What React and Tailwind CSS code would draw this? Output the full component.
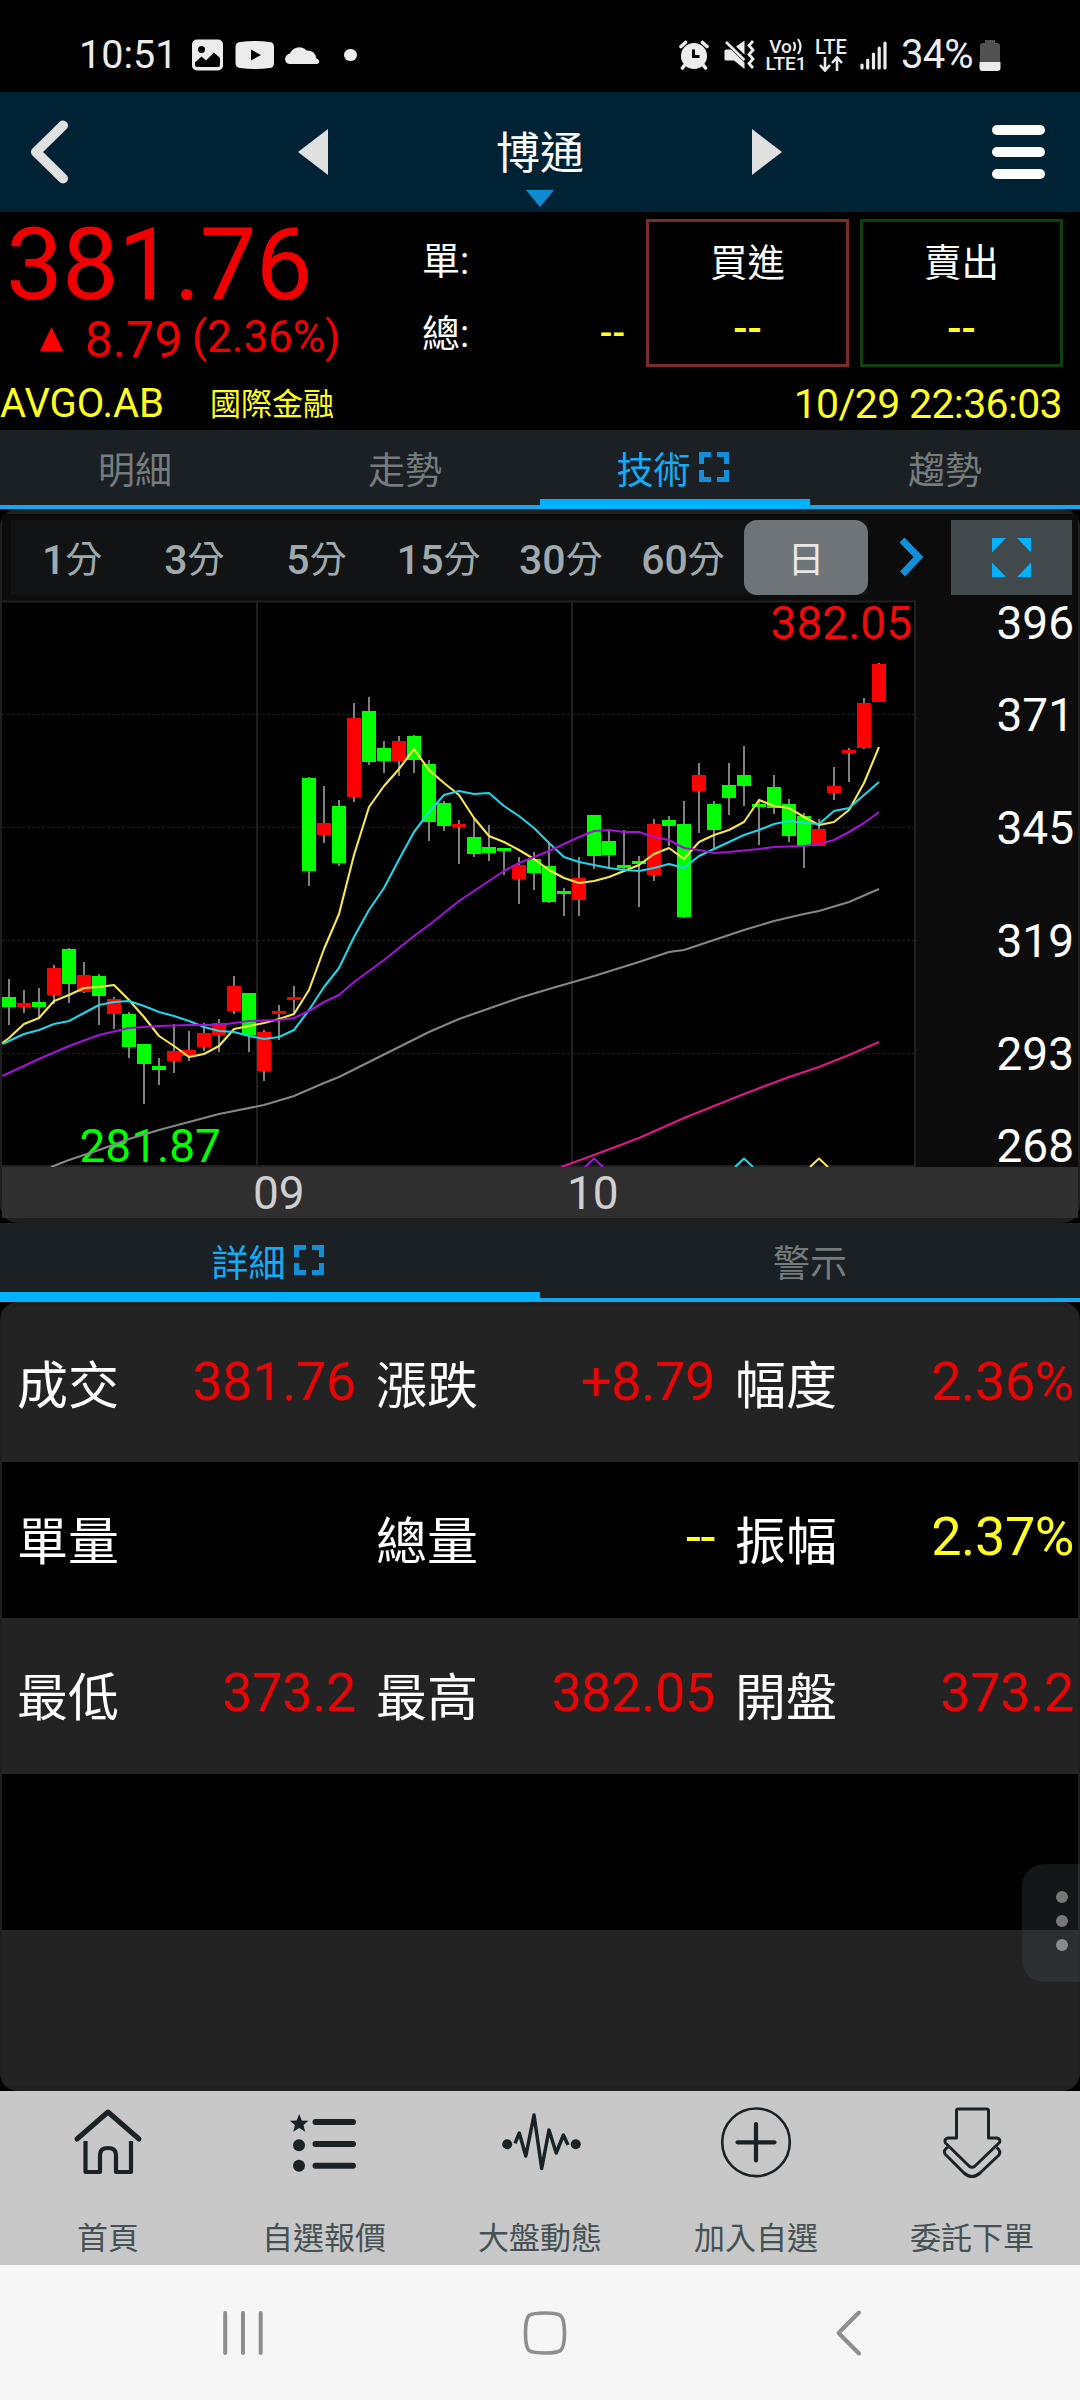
import React from "react";

// [bodyTop, bodyBottom, wickTop, wickBottom, rising]
const CANDLES = [
  [997, 1007, 979, 1025, 0], [1003, 1007, 990, 1013, 1], [1002, 1007, 988, 1018, 0], [968, 995, 965, 1004, 1],
  [949, 984, 948, 1003, 0], [975, 992, 962, 993, 1], [976, 996, 974, 1025, 0], [999, 1014, 997, 1029, 1],
  [1014, 1047, 1012, 1058, 0], [1044, 1064, 1044, 1104, 0], [1066, 1070, 1058, 1085, 0], [1051, 1061, 1024, 1073, 1],
  [1050, 1056, 1031, 1061, 1], [1033, 1047, 1023, 1051, 1], [1023, 1035, 1019, 1052, 1], [986, 1011, 976, 1014, 1],
  [993, 1035, 993, 1052, 0], [1032, 1071, 1030, 1081, 1], [1011, 1014, 1005, 1040, 1], [997, 1000, 986, 1013, 1],
  [778, 871, 777, 886, 0], [823, 835, 786, 843, 1], [806, 863, 800, 866, 0], [718, 797, 703, 802, 1],
  [711, 762, 697, 765, 0], [748, 761, 741, 773, 0], [741, 761, 736, 776, 1], [736, 760, 735, 773, 0],
  [764, 822, 760, 841, 0], [803, 826, 801, 831, 0], [824, 827, 820, 864, 1], [837, 854, 817, 857, 0],
  [847, 853, 825, 861, 0], [848, 851, 848, 875, 0], [865, 879, 857, 904, 1], [859, 873, 852, 890, 0],
  [866, 902, 843, 903, 0], [891, 894, 888, 916, 0], [878, 900, 857, 916, 1], [815, 856, 815, 869, 0],
  [841, 855, 830, 868, 0], [865, 868, 830, 872, 0], [861, 864, 856, 907, 0], [824, 875, 819, 881, 1],
  [820, 826, 816, 846, 0], [824, 917, 801, 918, 0], [775, 791, 763, 833, 1], [804, 830, 801, 850, 0],
  [785, 798, 763, 815, 0], [775, 786, 746, 806, 0], [804, 807, 799, 845, 0], [787, 808, 775, 814, 0],
  [804, 836, 799, 842, 0], [816, 846, 813, 868, 0], [829, 846, 819, 846, 1], [786, 793, 767, 800, 1],
  [750, 753, 748, 782, 1], [703, 748, 698, 749, 1], [664, 702, 663, 702, 1],
];

const MA5 = [1038, 1024, 1018, 1001, 995, 988, 987, 985, 1000, 1017, 1036, 1046, 1057, 1054, 1046, 1029, 1026, 1023, 1019, 1014, 990, 949, 914, 855, 807, 786, 769, 749, 770, 783, 795, 818, 836, 842, 850, 859, 870, 878, 883, 881, 877, 871, 865, 854, 848, 859, 842, 835, 830, 822, 800, 806, 808, 817, 825, 822, 810, 783, 747];
const MA10 = [1041, 1034, 1030, 1024, 1021, 1013, 1005, 1002, 1001, 1006, 1012, 1016, 1021, 1027, 1031, 1032, 1036, 1039, 1037, 1030, 1010, 987, 968, 937, 910, 888, 859.5, 832, 812, 795, 791, 794, 793, 806, 816, 828, 843, 857, 862, 865, 868, 870, 871, 868, 864, 868, 856, 849, 842, 835, 830, 824, 821, 823, 824, 811, 808, 795, 782];
const MA20 = [[-0.45, 1076], [2, 1059], [4, 1046], [6, 1035], [8, 1028], [10, 1026], [12, 1025], [14, 1025], [16, 1021], [18, 1020], [19, 1018], [20, 1011], [21, 1002], [22, 995], [23, 982], [24, 971], [25, 960], [26, 948], [27, 936], [28, 925], [29, 913], [30, 901], [32, 881], [33, 871], [34, 863], [35, 857], [36, 851], [37, 844], [38, 837], [39, 831], [40, 830], [41, 832], [42, 832], [43, 837], [44, 840], [45, 848], [46, 850], [47, 853], [48, 852], [50, 849], [51, 847], [53, 846], [54, 844], [55, 840], [56, 832], [57, 823], [58, 812]];
const MA60 = [[2.8, 1167], [4, 1160], [6, 1150], [8, 1139], [10, 1130], [12, 1122], [14, 1114], [15, 1111], [17, 1105], [19, 1096], [21, 1083], [22, 1077], [24, 1062], [28, 1032], [30, 1019], [34, 998], [36, 989], [39, 976], [42, 962], [44, 952], [45, 950], [46, 945], [47, 940], [49, 930], [51, 921], [53, 914], [54, 911], [56, 902], [58, 889]];
const MA120 = [[36.8, 1167], [39, 1155], [42, 1138], [45, 1118], [46, 1112], [49, 1094], [52, 1077], [54, 1067], [56, 1055], [58, 1042]];

const cx = (k) => 7 + 15 * k;
const pts = (list) => list.map(([k, y]) => `${cx(k)},${y}`).join(" ");
const series = (list, start) => pts([[-0.45, start], ...list.map((y, k) => [k, y])]);

function Chart() {
  return (
    <svg width="914" height="566" viewBox="0 601 914 566" className="block shrink-0 overflow-visible bg-black">
      <g stroke="#202020" strokeWidth="2" fill="none">
        <path d="M255 601V1167M570 601V1167M913 601V1167" />
        <path d="M0 601.500H914" />
        <path d="M0 1166H914" />
        <path d="M0 714.300H914M0 827.300H914M0 940.500H914M0 1053.600H914" stroke="#1c1c1c" strokeWidth="1.300" strokeDasharray="3 2" />
      </g>
      <text x="910" y="639" textAnchor="end" fontSize="46" fill="#f00a0a">382.05</text>
      <text x="77.500" y="1162" fontSize="46" fill="#00ff00">281.87</text>
      {CANDLES.map(([t, b, wt, wb, up], k) => (
        <g key={k}>
          <rect x={cx(k) - 1} y={wt} width="2" height={wb - wt} fill="#808080" />
          <rect x={cx(k) - 7} y={t} width="14" height={b - t} fill={up ? "#ff0000" : "#00ff00"} />
        </g>
      ))}
      <g fill="none" strokeWidth="2.100" strokeLinejoin="round">
        <polyline points={series(MA5, 1043)} stroke="#f8e94a" />
        <polyline points={series(MA10, 1044)} stroke="#1fd5ea" />
        <polyline points={pts(MA20)} stroke="#a312d6" />
        <polyline points={pts(MA60)} stroke="#858788" />
        <polyline points={pts(MA120)} stroke="#e0168c" />
        <path d="M583 1167L592 1158.500L601 1167" stroke="#a312d6" />
        <path d="M733 1167L742 1158.500L751 1167" stroke="#1fd5ea" />
        <path d="M808 1167L817 1158.500L826 1167" stroke="#f8e94a" />
      </g>
    </svg>
  );
}

function StatusBar() {
  return (
    <div className="flex h-[92px] items-center justify-between bg-black pl-[79px] pr-[79px] pt-[18px] text-[#ececec]">
      <div className="flex items-center">
        <span className="w-[113px] text-[39.5px] leading-none">10:51</span>
        <svg width="32" height="32" viewBox="0 0 32 32">
          <rect x="0" y="0.5" width="31" height="31" rx="5" fill="#ececec" />
          <circle cx="9.5" cy="10.5" r="3.5" fill="#000" />
          <path d="M3 23.5L9.5 17.5L14 21.5L22 13.5L28 19V26Q28 28 26 28H5Q3 28 3 26Z" fill="#000" />
        </svg>
        <svg width="40" height="30" viewBox="0 0 40 30" className="ml-[11px]">
          <path d="M5 2Q20 0 35 2Q39 2.500 39 7V23Q39 27.500 35 28Q20 30 5 28Q0.500 27.500 0.500 23V7Q0.500 2.500 5 2Z" fill="#ececec" />
          <path d="M16 9.500L26 15L16 20.500Z" fill="#000" />
        </svg>
        <svg width="36" height="22" viewBox="0 0 36 22" className="mb-[2px] ml-[9px]">
          <path d="M5 21A4.500 5 0 0 1 3 12Q4 10.500 6 10.500A10 10 0 0 1 22.500 7.500Q31 7 32.500 15.500Q36 17 35 19.500Q34.500 21 32 21Z" fill="#ececec" />
        </svg>
        <span className="ml-[24px] size-[12.500px] rounded-full bg-[#ececec]" />
      </div>
      <div className="flex items-center">
        <svg width="30" height="30" viewBox="0 0 30 30">
          <circle cx="15" cy="16" r="13" fill="#ececec" />
          <path d="M2 6.500L6.500 2.500M28 6.500L23.500 2.500M5 26L3.500 28M25 26L26.500 28" stroke="#ececec" strokeWidth="3.600" strokeLinecap="round" />
          <path d="M14.500 9.500V16.500H20.500" fill="none" stroke="#000" strokeWidth="3" />
        </svg>
        <svg width="31" height="30" viewBox="0 0 31 30" className="ml-[15px]">
          <path d="M0.500 11Q0.500 9.500 2 9.500H7L20.500 22.500V29L10 20.500H2Q0.500 20.500 0.500 19Z" fill="#ececec" />
          <path d="M12 6.500L20.500 0.500V14.500Z" fill="#ececec" />
          <path d="M2 2L20.500 20" stroke="#ececec" strokeWidth="2.500" />
          <path d="M29 1L25 5.500L29 10L25 14.500L29 19L25 23.500L29 28" fill="none" stroke="#ececec" strokeWidth="2.800" />
        </svg>
        <div className="ml-[12px] flex w-[38px] shrink-0 flex-col items-center font-medium leading-none">
          <div className="flex h-[17px] shrink-0 items-center">
            <span className="text-[19px] leading-[17px]">Vo</span>
            <svg width="11" height="17" viewBox="0 0 11 17" className="shrink-0">
              <path d="M1.500 4Q4.500 8.500 1.500 13M6 1Q11 8.500 6 16" fill="none" stroke="#ececec" strokeWidth="2.200" />
            </svg>
          </div>
          <span className="text-[19px] leading-[17px]">LTE1</span>
        </div>
        <div className="ml-[9px] flex w-[34px] shrink-0 flex-col items-center font-medium">
          <span className="text-[20px] leading-[18px]">LTE</span>
          <svg width="26" height="16" viewBox="0 0 26 16">
            <path d="M7 1V14M2 9L7 14.500L12 9M19 15V2M14 7L19 1.500L24 7" fill="none" stroke="#ececec" strokeWidth="2.600" />
          </svg>
        </div>
        <svg width="28" height="30" viewBox="0 0 28 30" className="ml-[12px]">
          <path d="M2 25V28M7.700 20V28M13.500 14V28M19.200 8V28M25 3V28" stroke="#ececec" strokeWidth="3.200" strokeLinecap="round" />
        </svg>
        <span className="ml-[13px] w-[71px] text-[40px] leading-none tracking-[-0.800px]">34%</span>
        <svg width="22" height="33" viewBox="0 0 22 33" className="ml-[7px]">
          <path d="M6 1H16V4H18Q21 4 21 7V23H1V7Q1 4 4 4H6Z" fill="#525252" />
          <path d="M0.500 23H21.500V29Q21.500 32 18.500 32H3.500Q0.500 32 0.500 29Z" fill="#ececec" />
        </svg>
      </div>
    </div>
  );
}

function Header() {
  return (
    <div className="flex h-[120px] items-center bg-[#002235]">
      <svg width="38" height="64" viewBox="0 0 38 64" className="ml-[30px]">
        <path d="M33 5.500L6 32L33 58.500" fill="none" stroke="#e0e0e0" strokeWidth="10" strokeLinecap="round" strokeLinejoin="round" />
      </svg>
      <svg width="30" height="46" viewBox="0 0 30 46" className="ml-[230px]"><path d="M30 0V46L0 23Z" fill="#e0e0e0" /></svg>
      <div className="ml-[168px] flex h-full w-[88px] flex-col items-center pt-[38px]">
        <span className="text-[44px] leading-[48px] text-white">博通</span>
        <svg width="28" height="17" viewBox="0 0 28 17" className="mt-[12px]"><path d="M0 0H28L14 17Z" fill="#0f8bd0" /></svg>
      </div>
      <svg width="30" height="46" viewBox="0 0 30 46" className="ml-[168px]"><path d="M0 0V46L30 23Z" fill="#e0e0e0" /></svg>
      <div className="ml-[210px] flex w-[53px] flex-col gap-[12px]">
        <span className="h-[10px] rounded-full bg-white" />
        <span className="h-[10px] rounded-full bg-white" />
        <span className="h-[10px] rounded-full bg-white" />
      </div>
    </div>
  );
}

function Quote() {
  return (
    <div className="h-[218px] bg-black">
      <div className="flex h-[164px]">
        <div className="w-[422px] text-[#f00000]">
          <div className="pl-[6px] pt-[2px] text-[101px] leading-[101px] tracking-[-0.800px]">381.76</div>
          <div className="flex pl-[40px]">
            <svg width="23" height="24" viewBox="0 0 23 24" className="mt-[12px]"><path d="M11.500 0L23 24H0Z" fill="#ff0000" /></svg>
            <span className="ml-[22px] w-[107px] text-[50px] leading-[50px]">8.79</span>
            <span className="text-[44px] leading-[45px]">(2.36%)</span>
          </div>
        </div>
        <div className="w-[224px] text-[38px] leading-[40px] text-white">
          <div className="mt-[29px]">單:</div>
          <div className="mt-[33px] flex justify-between pr-[21px]">
            <span>總:</span>
            <span className="text-[37px] font-medium text-[#ffff22]">--</span>
          </div>
        </div>
        <div className="mt-[7px] flex gap-[11px]">
          <div className="flex h-[148px] w-[203px] flex-col items-center border-[3px] border-[#7a2b2b] pt-[20.500px] text-[37.500px] leading-[40px] text-white">
            <span>買進</span>
            <span className="mt-[26px] text-[42px] font-medium text-[#ffff22]">--</span>
          </div>
          <div className="flex h-[148px] w-[203px] flex-col items-center border-[3px] border-[#12400c] pt-[20.500px] text-[37.500px] leading-[40px] text-white">
            <span>賣出</span>
            <span className="mt-[26px] text-[42px] font-medium text-[#ffff22]">--</span>
          </div>
        </div>
      </div>
      <div className="flex h-[54px] items-center pt-[2px] text-[#ffff22]">
        <span className="w-[210px] text-[40px] leading-none">AVGO.AB</span>
        <span className="text-[31px] leading-none">國際金融</span>
        <span className="ml-auto mr-[18px] text-[41px] leading-none tracking-[-0.650px]">10/29 22:36:03</span>
      </div>
    </div>
  );
}

function Corners() {
  return (
    <svg width="30" height="30" viewBox="0 0 30 30" className="mb-[1px] ml-[8px] mr-[5px]">
      <path d="M2.500 12V2.500H12M18 2.500H27.500V12M27.500 18V27.500H18M12 27.500H2.500V18" fill="none" stroke="#128fd6" strokeWidth="5" />
    </svg>
  );
}

function Tabs({ items }) {
  return (
    <div className="flex h-[79px] bg-[#1a2023]">
      {items.map(([label, active]) => (
        <div
          key={label}
          className={
            active
              ? "flex flex-1 items-center justify-center border-b-[10px] border-[#00b2ff] pt-[6px] text-[37px] text-[#12adf5]"
              : "flex flex-1 items-center justify-center border-b-[4px] border-[#14a8ef] pt-[4px] text-[37px] text-[#767b7d]"
          }
        >
          <span className={active ? "mt-[9px] leading-[40px]" : "mt-[5px] leading-[40px]"}>{label}</span>
          {active && <Corners />}
        </div>
      ))}
    </div>
  );
}

const INTERVALS = ["1", "3", "5", "15", "30", "60"];

function ChartPanel() {
  return (
    <div className="h-[714px] rounded-[18px] bg-[#1f1f1f] px-[2px] pt-[5px] pb-[5px]">
      <div className="flex h-[87px] bg-[#0c0c0c] pl-[9px] pt-[6px]">
        <div className="flex h-[75px] w-[857px] bg-[#121315]">
          {INTERVALS.map((n) => (
            <div key={n} className="flex w-[122.200px] items-center justify-center pt-[5px] text-[#a0a9ac]">
              <span className="text-[41px] font-medium leading-none">{n}</span>
              <span className="text-[37px] leading-none">分</span>
            </div>
          ))}
          <div className="flex flex-1 items-center justify-center rounded-[13px] bg-[#6e7478] pt-[5px] text-[37px] leading-none text-[#e8e8e8]">日</div>
        </div>
        <svg width="25" height="40" viewBox="0 0 25 40" className="ml-[31px] mt-[17px]">
          <path d="M3 3L19.500 20L3.500 37" fill="none" stroke="#128fd6" strokeWidth="7" />
        </svg>
        <div className="ml-[27px] flex h-[75px] w-[121px] items-center justify-center bg-[#41494c] pr-px">
          <svg width="39" height="39" viewBox="0 0 39 39">
            <path d="M0 0H14L0 14.500ZM39 0H25L39 14.500ZM0 39H14L0 24.500ZM39 39H25L39 24.500Z" fill="#00b2ff" />
          </svg>
        </div>
      </div>
      <div className="flex h-[566px] bg-[#0c0c0c]">
        <Chart />
        <div className="flex flex-1 flex-col items-end pr-[4px] text-[46px] leading-[46px] text-white">
          <span className="mt-[-1px]">396</span>
          <span className="mt-[46px]">371</span>
          <span className="mt-[67px]">345</span>
          <span className="mt-[67px]">319</span>
          <span className="mt-[67px]">293</span>
          <span className="mt-[46px]">268</span>
        </div>
      </div>
      <div className="relative flex h-[51px] items-center bg-[#2f2f2f] text-[46px] leading-none text-[#cfcfcf]">
        <span className="ml-[251px] w-[314px]">09</span>
        <span>10</span>
      </div>
    </div>
  );
}

const ROWS = [
  [["成交", "381.76", "r"], ["漲跌", "+8.79", "r"], ["幅度", "2.36%", "r"]],
  [["單量", "", "y"], ["總量", "--", "y"], ["振幅", "2.37%", "y"]],
  [["最低", "373.2", "r"], ["最高", "382.05", "r"], ["開盤", "373.2", "r"]],
  [],
  [],
];

function Details() {
  return (
    <div className="h-[789px] overflow-hidden rounded-[18px] bg-[#1f1f1f] px-[2px] py-[5px]">
      {ROWS.map((row, i) => (
        <div key={i} className={i % 2 ? "flex h-[156px] bg-black pl-[15px]" : "flex h-[156px] bg-[#232323] pl-[15px] first:h-[155px]"}>
          {row.map(([label, value, tone]) => (
            <div key={label} className="flex w-[359px] shrink-0 items-center justify-between pr-[20px]">
              <span className="mt-[4px] text-[51px] leading-none text-white">{label}</span>
              <span
                className={
                  tone === "r"
                    ? "mt-[-6px] text-[54px] leading-none tracking-[-0.400px] text-[#e60606]"
                    : "mt-[-6px] text-[54px] leading-none tracking-[-0.400px] text-[#ffff22]"
                }
              >
                {value}
              </span>
            </div>
          ))}
        </div>
      ))}
    </div>
  );
}

const NAV = [
  ["首頁", (
    <g fill="none" stroke="#1a2226" strokeWidth="4.200" strokeLinejoin="round">
      <path d="M19 39L50 12L81 39" strokeWidth="5" strokeLinecap="round" />
      <path d="M27.500 41V72H42V55Q42 48 50 48Q58 48 58 55V72H73V41" />
    </g>
  )],
  ["自選報價", (
    <g fill="#1a2226">
      <path d="M25.200 14L27.800 20.500L34.500 20.800L29.500 25L31.200 31.800L25.200 28L19.200 31.800L20.900 25L15.900 20.800L22.600 20.500Z" />
      <circle cx="25" cy="45.300" r="6" />
      <circle cx="25" cy="65.800" r="6" />
      <path d="M41.500 22H79M41.500 44H79M41.500 65.800H79" stroke="#1a2226" strokeWidth="6" strokeLinecap="round" />
    </g>
  )],
  ["大盤動態", (
    <g fill="none" stroke="#1a2226" strokeWidth="3.500" strokeLinejoin="round">
      <path d="M25 43.300L29.300 33L35.800 56L44 15L51.700 68.500L59 30L66.200 53L73.400 35L78 45" />
      <circle cx="17.200" cy="44.300" r="5" fill="#1a2226" stroke="none" />
      <circle cx="85.800" cy="44.300" r="5" fill="#1a2226" stroke="none" />
    </g>
  )],
  ["加入自選", (
    <g fill="none" stroke="#1a2226" strokeLinecap="round">
      <circle cx="50" cy="42.300" r="33.800" strokeWidth="2.600" />
      <path d="M31.500 42.300H68.500M50 24V60.500" strokeWidth="4.200" />
    </g>
  )],
  ["委託下單", (
    <g fill="none" stroke="#1a2226" strokeWidth="3" strokeLinejoin="round">
      <path d="M36 9H65Q66.500 9 66.500 11V38H75Q79 39 77.500 42.500L53 66Q50 68.500 47 66L23.500 43Q21.500 39 26 38H34.500V11Q34.500 9 36 9Z" />
      <path d="M26 47Q21 50 23 54L42 73Q50 80 58 73L77 55Q79.500 51 74.500 47.500" />
    </g>
  )],
];

function BottomNav() {
  return (
    <div className="flex h-[174px] bg-[#c8c8c8]">
      {NAV.map(([label, icon]) => (
        <div key={label} className="flex w-[216px] flex-col items-center pt-[9px]">
          <svg width="100" height="84" viewBox="0 0 100 84">{icon}</svg>
          <span className="mt-[37px] text-[31px] leading-[36px] text-[#465154]">{label}</span>
        </div>
      ))}
    </div>
  );
}

function SystemNav() {
  return (
    <div className="flex h-[135px] items-center bg-[#f6f6f6] pt-px pl-[220px]">
      <svg width="46" height="48" viewBox="0 0 46 48">
        <path d="M5.200 4V44M23 4V44M40.700 4V44" stroke="#8e8e8e" strokeWidth="4" strokeLinecap="round" />
      </svg>
      <svg width="48" height="48" viewBox="0 0 48 48" className="ml-[255px]">
        <path d="M24 4Q36 4 39.500 6.500Q43.500 10 43.500 24Q43.500 38 39.500 41.500Q36 44 24 44Q12 44 8 41.500Q4.500 38 4.500 24Q4.500 10 8 6.500Q12 4 24 4Z" fill="none" stroke="#8e8e8e" strokeWidth="3.600" />
      </svg>
      <svg width="30" height="48" viewBox="0 0 30 48" className="ml-[264px]">
        <path d="M26 3.500L5.500 24L26 44.500" fill="none" stroke="#8e8e8e" strokeWidth="4" strokeLinecap="round" strokeLinejoin="round" />
      </svg>
    </div>
  );
}

export default function App() {
  return (
    <div className="relative h-[2400px] w-[1080px] overflow-hidden whitespace-nowrap bg-black font-[Roboto,'Noto_Sans_CJK_TC',sans-serif]">
      <StatusBar />
      <Header />
      <Quote />
      <Tabs items={[["明細"], ["走勢"], ["技術", true], ["趨勢"]]} />
      <ChartPanel />
      <Tabs items={[["詳細", true], ["警示"]]} />
      <Details />
      <BottomNav />
      <SystemNav />
      <div className="absolute right-0 top-[1864px] flex h-[118px] w-[58px] flex-col items-end justify-center gap-[12px] rounded-l-[22px] bg-[#424d50]/30 pb-[4px] pr-[12px]">
        <span className="size-[12px] rounded-full bg-[#777777]" />
        <span className="size-[12px] rounded-full bg-[#777777]" />
        <span className="size-[12px] rounded-full bg-[#8a8a8a]" />
      </div>
    </div>
  );
}
